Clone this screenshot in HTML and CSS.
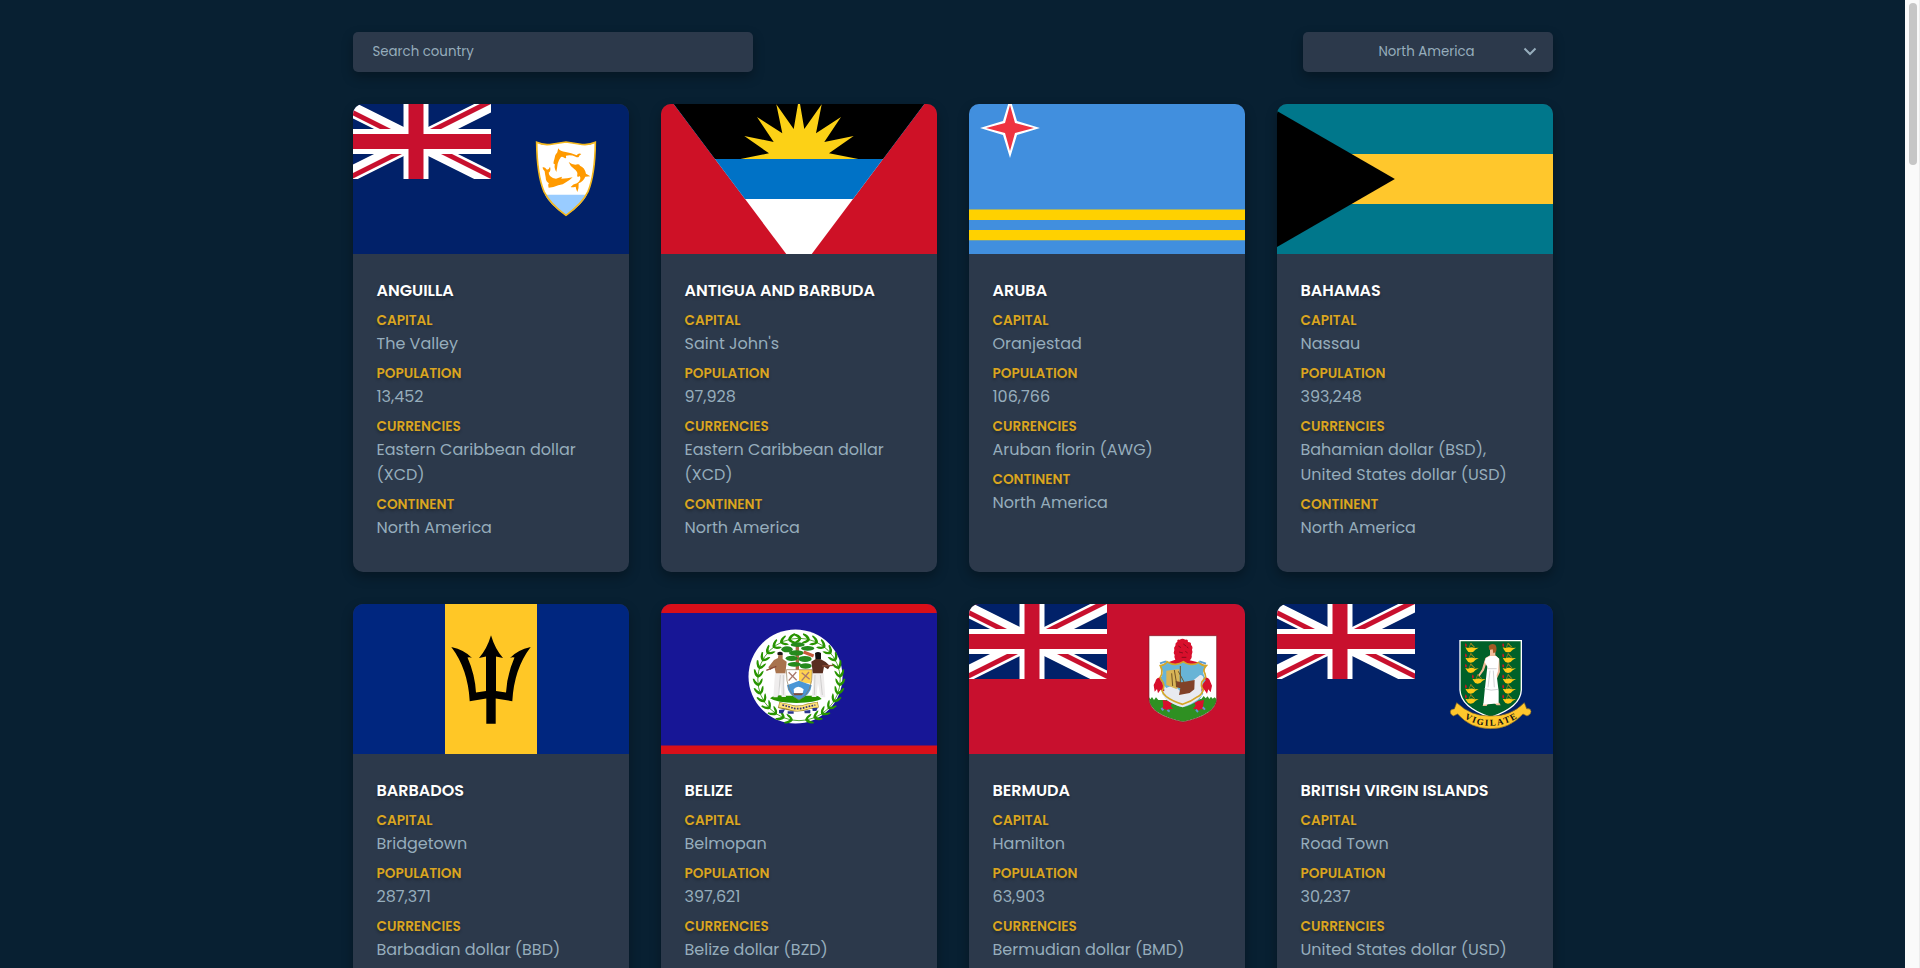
FILE: index.html
```html
<!DOCTYPE html>
<html lang="en">
<head>
<meta charset="utf-8">
<title>Countries</title>
<link rel="stylesheet" href="styles.css">
</head>
<body>
<svg class="defs" aria-hidden="true">
  <defs>
    <clipPath id="saltire"><path d="M30 15h30v15zv15H0zH0V0zV0h30z"/></clipPath>
    <clipPath id="canton"><path d="M0 0h60v30H0z"/></clipPath>
    <g id="union-jack" clip-path="url(#canton)">
      <path fill="#012169" d="M0 0h60v30H0z"/>
      <path d="M0 0l60 30M60 0L0 30" stroke="#fff" stroke-width="6"/>
      <path d="M0 0l60 30M60 0L0 30" clip-path="url(#saltire)" stroke="#c8102e" stroke-width="4"/>
      <path d="M30 0v30M0 15h60" stroke="#fff" stroke-width="10"/>
      <path d="M30 0v30M0 15h60" stroke="#c8102e" stroke-width="6"/>
    </g>
    <path id="leaf" d="M-5.500-46Q1-45.500 2.500-41Q.5-36.500-5-36Q-5-37.500-1.500-39.500L-.3-41Q-2.500-43.500-5.500-44.500Z"/>
    <g id="sprig">
      <use href="#leaf"/><use href="#leaf" transform="rotate(12)"/><use href="#leaf" transform="rotate(24)"/>
    </g>
    <g id="lamp">
      <path fill="#cf1421" d="M-19-19q5 5 3 11h-4q-3-5 1-11z"/>
      <path fill="none" stroke="#b78d1a" stroke-width="2" d="M-9-5L-3-19L7-6M-5-17l14 11"/>
      <path fill="#fcc917" d="M-20-6l8 2q12-5 20 0l12-1-10 6q-5 8-14 8t-12-8z"/>
    </g>
  </defs>
</svg>
<div class="window">
  <main class="page">
    <div class="container">
      <header class="toolbar">
        <input class="search" type="text" placeholder="Search country">
        <div class="select">
          <span class="select-label">North America</span>
          <svg class="chevron" viewBox="0 0 14 9"><path d="M1.500 1.500L7 7l5.500-5.500"/></svg>
        </div>
      </header>
      <section class="grid">
        <article class="card">
          <svg class="flag" viewBox="0 0 300 150" preserveAspectRatio="xMidYMid slice">
            <path fill="#012169" d="M0 0h300v150H0z"/>
            <use href="#union-jack" transform="scale(2.5)"/>
            <g transform="translate(179 26) scale(.3333)">
              <path fill="#fff" d="M50 37q21 12 49 5 20-3 39-6 19 3 39 6 28 7 49-5-1 98-22 148-17 36-66 71-49-35-66-71Q51 135 50 37z"/>
              <path fill="#9cf" d="M75 194h126q-16 32-63 62-47-30-63-62z"/>
              <path fill="none" stroke="#f5b81c" stroke-width="5" d="M50 37q21 10 49 5 20-3 39-6 19 3 39 6 28 5 49-5-1 98-22 148-17 36-66 71-49-35-66-71Q51 135 50 37z"/>
              <g fill="#ff9a00">
                <path d="M115 55q5 10 22 11 17 3 33 10 5-8 14-4-7 4-8 9-4 2-9-1-14-6-29-3 2 9-3 8-7-7-12-4-8 10-10 20-2 15-4 25-8-13-4-23-8 1-2-15 1-14 9-21 1-6 3-12z"/>
                <path d="M146 96q10 8 20 8 12-4 14 3 14 5 18 24l13 8-15 1q-6 14-20 20 1 16-4 26-4-8-5-16-11 3-15 1 7-9 19-11 15-12 8-22-10 7-7-5 2-8-10-17-12-8-16-20z"/>
                <path d="M68 111q8 0 13 8 6 0 9-9 4 12-4 18 1 14 22 18 12-5 18-6l-2 6q18 0 34-4-8 8-20 15-8 7-23 9-15 7-29 7-3-11 1-13-10-5-10-18-2-8-3-18-7-5-6-13z"/>
              </g>
            </g>
          </svg>
          <div class="info">
            <h2 class="name">ANGUILLA</h2>
            <dl class="facts">
              <div class="fact"><dt>CAPITAL</dt><dd>The Valley</dd></div>
              <div class="fact"><dt>POPULATION</dt><dd>13,452</dd></div>
              <div class="fact"><dt>CURRENCIES</dt><dd>Eastern Caribbean dollar (XCD)</dd></div>
              <div class="fact"><dt>CONTINENT</dt><dd>North America</dd></div>
            </dl>
          </div>
        </article>
        <article class="card">
          <svg class="flag" viewBox="0 0 276 150">
            <path fill="#ce1126" d="M0 0h276v150H0z"/>
            <path fill="#fff" d="M0-17h276L138 167z"/>
            <path fill="#0072c6" d="M0-17h276L192 95H84z"/>
            <path fill="#000" d="M0-17h276L222 55H54z"/>
            <path fill="#fcd116" d="M79.500 55L108 49.300 83.300 32l29.400 6L96 13l25.300 16.300L115.300.3 132.700 25 138-6l5.300 31L160.700.3 155 29.300 180 13l-16.700 25 29.400-6L168 49.300 197.300 55z"/>
          </svg>
          <div class="info">
            <h2 class="name">ANTIGUA AND BARBUDA</h2>
            <dl class="facts">
              <div class="fact"><dt>CAPITAL</dt><dd>Saint John's</dd></div>
              <div class="fact"><dt>POPULATION</dt><dd>97,928</dd></div>
              <div class="fact"><dt>CURRENCIES</dt><dd>Eastern Caribbean dollar (XCD)</dd></div>
              <div class="fact"><dt>CONTINENT</dt><dd>North America</dd></div>
            </dl>
          </div>
        </article>
        <article class="card">
          <svg class="flag" viewBox="0 0 276 150">
            <path fill="#418fde" d="M0 0h276v150H0z"/>
            <path fill="#ffd100" d="M0 105.500h276V116H0zM0 126h276v10.300H0z"/>
            <path fill="#fff" d="M41-6l7 23L71 24l-23 7L41 54l-7-23L11 24l23-7z"/>
            <path fill="#ef3340" d="M41 1l5 18L65 24l-19 5L41 47l-5-18L17 24l19-5z"/>
          </svg>
          <div class="info">
            <h2 class="name">ARUBA</h2>
            <dl class="facts">
              <div class="fact"><dt>CAPITAL</dt><dd>Oranjestad</dd></div>
              <div class="fact"><dt>POPULATION</dt><dd>106,766</dd></div>
              <div class="fact"><dt>CURRENCIES</dt><dd>Aruban florin (AWG)</dd></div>
              <div class="fact"><dt>CONTINENT</dt><dd>North America</dd></div>
            </dl>
          </div>
        </article>
        <article class="card">
          <svg class="flag" viewBox="0 0 300 150" preserveAspectRatio="xMidYMid slice">
            <path fill="#00778b" d="M0 0h300v150H0z"/>
            <path fill="#ffc72c" d="M0 50h300v50H0z"/>
            <path fill="#000" d="M0 0l129.900 75L0 150z"/>
          </svg>
          <div class="info">
            <h2 class="name">BAHAMAS</h2>
            <dl class="facts">
              <div class="fact"><dt>CAPITAL</dt><dd>Nassau</dd></div>
              <div class="fact"><dt>POPULATION</dt><dd>393,248</dd></div>
              <div class="fact"><dt>CURRENCIES</dt><dd>Bahamian dollar (BSD), United States dollar (USD)</dd></div>
              <div class="fact"><dt>CONTINENT</dt><dd>North America</dd></div>
            </dl>
          </div>
        </article>
        <article class="card">
          <svg class="flag" viewBox="0 0 276 150">
            <path fill="#00267f" d="M0 0h276v150H0z"/>
            <path fill="#ffc726" d="M92 0h92v150H92z"/>
            <path id="prong" d="M98.300 43q13.500 3 20.700 11-2-1.200-4.500-.5 7.500 17 8.500 35l10-1.500V52.500L126 54q8-9 12-22.700V119.700h-4.700V94.500l-16.600 2.700Q115 65 98.300 43z"/>
            <use href="#prong" transform="matrix(-1 0 0 1 276 0)"/>
          </svg>
          <div class="info">
            <h2 class="name">BARBADOS</h2>
            <dl class="facts">
              <div class="fact"><dt>CAPITAL</dt><dd>Bridgetown</dd></div>
              <div class="fact"><dt>POPULATION</dt><dd>287,371</dd></div>
              <div class="fact"><dt>CURRENCIES</dt><dd>Barbadian dollar (BBD)</dd></div>
            </dl>
          </div>
        </article>
        <article class="card">
          <svg class="flag" viewBox="0 0 276 150">
            <path fill="#171696" d="M0 0h276v150H0z"/>
            <path fill="#d90f19" d="M0 0h276v9H0zM0 141.500h276v8.500H0z"/>
            <circle cx="134.500" cy="72.500" r="47" fill="#fff"/>
            <g transform="translate(138 75.500)" fill="#289400">
              <circle r="41.200" fill="none" stroke="#289400" stroke-width=".8"/>
              <use href="#sprig"/><use href="#sprig" transform="rotate(36)"/><use href="#sprig" transform="rotate(72)"/><use href="#sprig" transform="rotate(108)"/><use href="#sprig" transform="rotate(144)"/>
              <g transform="scale(-1 1)"><use href="#sprig" transform="rotate(12)"/><use href="#sprig" transform="rotate(48)"/><use href="#sprig" transform="rotate(84)"/><use href="#sprig" transform="rotate(120)"/><use href="#leaf" transform="rotate(156)"/><use href="#leaf" transform="rotate(168)"/></g>
            </g>
            <g transform="translate(74 16) scale(.3333)">
              <path fill="#289400" d="M105 235q15-12 40-8h85q20-2 30 10-20 10-75 12-60 0-80-14z"/>
              <path d="M182 72v78h10V72z" fill="#ad6643"/>
              <g fill="#258a1c">
                <ellipse cx="188" cy="74" rx="21" ry="7"/><ellipse cx="156" cy="88" rx="17" ry="9"/><ellipse cx="218" cy="85" rx="20" ry="7"/><ellipse cx="184" cy="99" rx="22" ry="8"/><ellipse cx="170" cy="115" rx="18" ry="8"/><ellipse cx="210" cy="117" rx="20" ry="9"/><ellipse cx="178" cy="133" rx="20" ry="7"/><ellipse cx="212" cy="138" rx="18" ry="8"/>
              </g>
              <path d="M206 96l30 12" stroke="#c75b3a" stroke-width="9"/>
              <path fill="#fff" d="M154 149h38v45h-36z"/>
              <path fill="#ffd250" d="M192 149h40l-3 42-37-5z"/>
              <path fill="#4a96d6" d="M156 196l36-14 38 14q-3 30-38 44-33-14-36-44z"/>
              <path fill="none" stroke="#8a7655" stroke-width="2" d="M154 149h78q2 70-40 92-39-20-38-92z"/>
              <path d="M161 157l24 24M184 156l-23 26M200 158l24 20M222 156l-22 26" stroke="#a97a6d" stroke-width="4"/>
              <path fill="#fff" d="M176 208q6-8 14-8t16 8l-3 12h-26z"/>
              <path d="M174 220h32l-6 6h-22z" fill="#804a38"/>
              <g>
                <path fill="#a8734d" d="M130 105h13v12l12 8-4 37h-28l-5-22-12 10-6-8 17-22 12-6z"/>
                <path fill="#1b1517" d="M127 98q8-6 16 0v7h-15z"/>
                <path fill="#efeded" d="M120 160h32l-4 36 5 35h-13l-5-42-7 43h-13z"/>
                <path d="M94 151l30-12" stroke="#8a4b37" stroke-width="4"/>
                <path d="M136 165l-5 62M145 165v60" stroke="#c0bebe" stroke-width="2"/>
              </g>
              <g>
                <path fill="#592e20" d="M242 105h14v12l16 9 13 12-6 10-12-8-4 22h-29l-5-37 13-8z"/>
                <path fill="#15100f" d="M240 99q9-6 18 0v18h-16z"/>
                <path fill="#efeded" d="M234 160h32l5 72h-14l-8-43-5 42h-14l5-36z"/>
                <path d="M262 138l34-2" stroke="#8a4b37" stroke-width="4"/>
                <path d="M240 165l-2 60M256 165l6 60" stroke="#c0bebe" stroke-width="2"/>
              </g>
              <path fill="none" stroke="#9e8227" stroke-width="18" d="M131 255q28 6 40 9 24 5 46-4l33-6"/>
              <path fill="none" stroke="#ffe27a" stroke-width="14" d="M133 255q28 4 38 9 24 5 46-4l31-6"/>
              <path fill="none" stroke="#343277" stroke-width="5" stroke-dasharray="5 4" d="M142 255q22 5 33 10 20 3 36-3l30-7"/>
              <path fill="#2a358c" d="M132 270l18-2-6 12h-12zM158 274h18v7h-18zM208 272l18-2v10h-17zM232 264h16l-4 9h-11z"/>
            </g>
          </svg>
          <div class="info">
            <h2 class="name">BELIZE</h2>
            <dl class="facts">
              <div class="fact"><dt>CAPITAL</dt><dd>Belmopan</dd></div>
              <div class="fact"><dt>POPULATION</dt><dd>397,621</dd></div>
              <div class="fact"><dt>CURRENCIES</dt><dd>Belize dollar (BZD)</dd></div>
            </dl>
          </div>
        </article>
        <article class="card">
          <svg class="flag" viewBox="0 0 300 150" preserveAspectRatio="xMidYMid slice">
            <path fill="#c8102e" d="M0 0h300v150H0z"/>
            <use href="#union-jack" transform="scale(2.5)"/>
            <g transform="translate(173 16) scale(.3333)">
              <path fill="#fff" d="M57 47h203v192q-4 46-101 67-98-21-102-67z"/>
              <path fill="#2f9022" d="M57 232l4 6 5-7 6 9 6-8 7 8h115l15-4 6-8 6 7 6-6 5 8 5-7 5 6 6-4 6 6q-4 46-101 67-98-21-102-67z"/>
              <g fill="#d80f2c">
                <path d="M142 65q-2-8 7-6 8-5 17 0 9-2 8 7 11 0 9 9 7 5 3 14 4 8-1 16 2 10-6 16l31 7 10 6-2 12-118 2-2-13 10-6 28-10q-5-7-2-14-5-6-1-15-3-8 3-13-1-9 6-12z"/>
                <path d="M96 172q-18 0-20 13l-5 10 3 20 7-8 3 13 8-11 12 6 6-34zM222 172q16 0 19 13l5 12-4 20-7-9-4 13-8-12-12 4-7-30z"/>
                <path d="M98 240l30 5-6 12 7 10h-12l-5 5-6-5-14 3 8-12zM222 240l-30 5 5 12-8 9 11 1 5 6 7-6 14 3-7-12z"/>
              </g>
              <path fill="#68b4d6" d="M91 137q14-2 19-12 17 9 26 8 13-1 24-8 12 9 24 8 12 1 22-6 9 10 22 10l-9 20 8 24-10 13-3 19 6 8-12 18q-20 15-49 23-29-8-49-23l-13-17 6-9-3-19-9-14 8-23z"/>
              <path fill="#e8eaf0" d="M98 192l11 12q13-8 29-3l12 12 60-48q12 1 10 12l-7 36 4 12-14 14q-20 15-45 23-29-8-49-23l-12-16 7-12z"/>
              <path fill="#d8b556" d="M109 152l39-5 2 50-11 10-30-12z"/>
              <path fill="#814128" d="M137 183l18 4 39-7-1 28-14 11-32 6 4-20-13-4z"/>
              <path d="M151 138v50M125 160l3 38M145 154l18 34M133 150l8 48" stroke="#715226" stroke-width="3" fill="none"/>
              <path fill="none" stroke="#d4a628" stroke-width="5" d="M91 137q15-2 20-12 16 9 26 8 12-1 23-8 12 9 24 8 12 1 22-6 9 10 23 10-12 13-4 24l2 11-11 13q-5 12 4 25-6 16-17 20-20 15-45 23-29-8-49-23-10-8-13-18 9-10 3-25l-9-14 5-10q3-12-4-26z"/>
              <path d="M90 130l18-6M208 124l20 7M94 264l6 7M112 270l7 5M198 269l6 7M218 262l7 7" stroke="#5b9bd0" stroke-width="6"/>
              <path fill="none" stroke="#7b1e28" stroke-width="2" d="M57 47h203v192q-4 46-101 67-98-21-102-67z"/>
              <path d="M145 78l8 5M160 72l8 6M147 96l12 3M166 94l7 5M155 112h14M170 80l5 4" stroke="#8a0c1c" stroke-width="3"/>
            </g>
          </svg>
          <div class="info">
            <h2 class="name">BERMUDA</h2>
            <dl class="facts">
              <div class="fact"><dt>CAPITAL</dt><dd>Hamilton</dd></div>
              <div class="fact"><dt>POPULATION</dt><dd>63,903</dd></div>
              <div class="fact"><dt>CURRENCIES</dt><dd>Bermudian dollar (BMD)</dd></div>
            </dl>
          </div>
        </article>
        <article class="card">
          <svg class="flag" viewBox="0 0 300 150" preserveAspectRatio="xMidYMid slice">
            <path fill="#012169" d="M0 0h300v150H0z"/>
            <use href="#union-jack" transform="scale(2.5)"/>
            <g transform="translate(165 16) scale(.3333)">
              <path fill="#006129" stroke="#fff" stroke-width="4" d="M90 62h184v148q-2 52-92 82-90-30-92-82z"/>
              <use href="#lamp" x="126" y="88"/><use href="#lamp" x="126" y="119"/><use href="#lamp" x="126" y="150"/><use href="#lamp" x="147" y="182"/><use href="#lamp" x="126" y="212"/><use href="#lamp" x="126" y="242"/>
              <use href="#lamp" x="238" y="88"/><use href="#lamp" x="238" y="119"/><use href="#lamp" x="238" y="150"/><use href="#lamp" x="238" y="182"/><use href="#lamp" x="238" y="212"/><use href="#lamp" x="238" y="242"/>
              <path fill="#f2bd9b" d="M180 84h16v22l12 10 2 40-10 22-4-3 5-24-5-30h-24l-10 30-13 18-4-4 11-17 10-34 14-8zM160 250h14l-4 8h-12zM192 248h16l4 8h-12z"/>
              <path fill="#a35a24" d="M176 78q8-10 20-4 6 8 2 22l-8 4-2-12-10 2z"/>
              <path fill="#fff" d="M168 114l12-6h18l9 8-3 38-4 12 6 48v36l-46 4 4-42 6-54 2-18-8-14z"/>
              <path fill="none" stroke="#b9bbc0" stroke-width="2" d="M172 146h28M163 206q20 8 42 2M180 152l-6 50M190 152l3 50"/>
              <path fill="#ffc72c" stroke="#82672a" stroke-width="2" d="M70 288q-10-4-9-13t12-8l7-19q45 42 101 40 61 2 102-40l7 18q12-2 13 8t-12 14l-12-6q-42 46-98 44-60 0-98-44z"/>
              <path id="motto" fill="none" d="M92 286q40 32 89 31 51 1 96-34"/>
              <text class="motto"><textPath href="#motto" startOffset="50%">VIGILATE</textPath></text>
            </g>
          </svg>
          <div class="info">
            <h2 class="name">BRITISH VIRGIN ISLANDS</h2>
            <dl class="facts">
              <div class="fact"><dt>CAPITAL</dt><dd>Road Town</dd></div>
              <div class="fact"><dt>POPULATION</dt><dd>30,237</dd></div>
              <div class="fact"><dt>CURRENCIES</dt><dd>United States dollar (USD)</dd></div>
            </dl>
          </div>
        </article>
      </section>
    </div>
  </main>
  <div class="scrollbar"><div class="thumb"></div></div>
</div>
</body>
</html>
```
FILE: styles.css
```css
* { box-sizing: border-box; margin: 0; padding: 0; }

body {
  background: #082032;
  font-family: Poppins, Inter, "Open Sans", sans-serif;
  overflow: hidden;
}

.defs { position: absolute; width: 0; height: 0; }

.window { display: flex; height: 100vh; overflow: hidden; }

.page { flex: 1; overflow: hidden; background: #082032; }

.container { width: 1200px; margin: 0 auto; padding-top: 32px; }

.toolbar { display: flex; justify-content: space-between; margin-bottom: 32px; }

.search,
.select {
  height: 40px;
  border: 0;
  border-radius: 5px;
  background: #2c394b;
  color: #96adbc;
  box-shadow: 0 5px 12px rgba(0, 0, 0, .3);
  font: 400 13.333px Poppins, Inter, sans-serif;
}

.search { width: 400px; padding: 0 20px 1px; }
.search::placeholder { color: #96adbc; opacity: 1; }

.select {
  position: relative;
  display: flex;
  align-items: center;
  justify-content: center;
  width: 250px;
  padding: 0 2px 1px 0;
}

.chevron { position: absolute; right: 16px; top: 15px; width: 14px; height: 9px; }
.chevron path { fill: none; stroke: #96adbc; stroke-width: 2; }

.grid { display: grid; grid-template-columns: repeat(4, 276px); gap: 32px; }

.card {
  overflow: hidden;
  min-height: 468px;
  border-radius: 10px;
  background: #2c394b;
  box-shadow: 0 5px 12px rgba(0, 0, 0, .3);
}

.flag { display: block; width: 276px; height: 150px; }

.info { padding: 25px 24px 32px; }

.name {
  margin-bottom: 7px;
  color: #fff;
  font-size: 16px;
  font-weight: 600;
  line-height: 24px;
  white-space: nowrap;
  text-shadow: 0 2px 3px rgba(0, 0, 0, .3);
}

.facts { display: grid; gap: 7px; }

.fact dt {
  color: #daa520;
  font-size: 13.6px;
  font-weight: 600;
  line-height: 21px;
  text-shadow: 0 2px 3px rgba(0, 0, 0, .3);
}

.fact dd {
  color: #96adbc;
  font-size: 16px;
  line-height: 25px;
}

.motto {
  font: 700 27px "Liberation Serif", serif;
  letter-spacing: 5px;
  text-anchor: middle;
  fill: #111;
}

.scrollbar {
  width: 15px;
  padding: 3px 3px 0 4px;
  border-right: 1px solid #ececec;
  background: #fafafa;
}

.thumb { width: 8px; height: 162px; border-radius: 4px; background: #c6c6c6; }
```
